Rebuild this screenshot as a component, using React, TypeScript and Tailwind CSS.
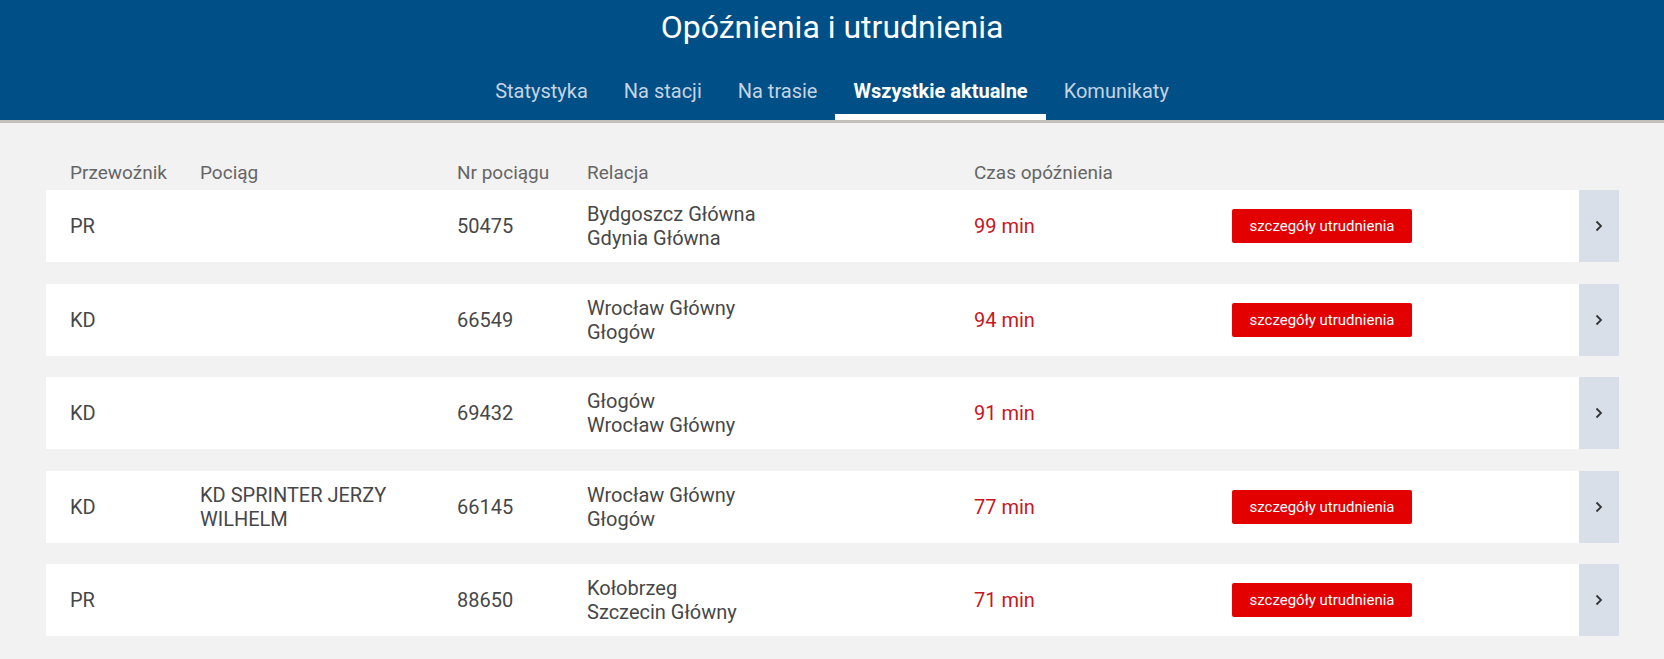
import React from "react";

interface Row {
    carrier: string;
    train: string;
    number: string;
    from: string;
    to: string;
    delay: number;
    details: boolean;
}

const rows: Row[] = [
    { carrier: "PR", train: "", number: "50475", from: "Bydgoszcz Główna", to: "Gdynia Główna", delay: 99, details: true },
    { carrier: "KD", train: "", number: "66549", from: "Wrocław Główny", to: "Głogów", delay: 94, details: true },
    { carrier: "KD", train: "", number: "69432", from: "Głogów", to: "Wrocław Główny", delay: 91, details: false },
    { carrier: "KD", train: "KD SPRINTER JERZY WILHELM", number: "66145", from: "Wrocław Główny", to: "Głogów", delay: 77, details: true },
    { carrier: "PR", train: "", number: "88650", from: "Kołobrzeg", to: "Szczecin Główny", delay: 71, details: true },
];

const tabs = ["Statystyka", "Na stacji", "Na trasie", "Wszystkie aktualne", "Komunikaty"];

const cols = "grid grid-cols-[130px_257px_130px_387px_258px_1fr] items-center";

const App: React.FC = () => {
    return (
        <div className="min-h-[659px] bg-[#f2f2f2] font-['Roboto',sans-serif] text-[#474747]">
            {/* Header */}
            <header className="bg-[#004f87] border-b-[3px] border-[#c3c0bb]">
                <h1 className="text-center text-white text-[32px] leading-[38px] pt-[8px]">Opóźnienia i utrudnienia</h1>
                <nav className="flex justify-center mt-[26px]">
                    {tabs.map((t) => {
                        const active = t === "Wszystkie aktualne";
                        return (
                            <a
                                key={t}
                                className={
                                    active
                                        ? "px-[18px] h-[48px] pt-[4px] text-[20px] font-bold text-white border-b-[6px] border-white"
                                        : "px-[18px] h-[48px] pt-[4px] text-[20px] text-[#c5d3e2] border-b-[6px] border-transparent"
                                }
                            >
                                {t}
                            </a>
                        );
                    })}
                </nav>
            </header>

            {/* Table */}
            <main className="pl-[46px] pr-[45px] pt-[36px]">
                <div className={`${cols} pl-[24px] pr-[40px] h-[31px] items-start text-[19px] text-[#666]`}>
                    <span>Przewoźnik</span>
                    <span>Pociąg</span>
                    <span>Nr pociągu</span>
                    <span>Relacja</span>
                    <span>Czas opóźnienia</span>
                    <span></span>
                </div>

                <div className="flex flex-col gap-[21.5px]">
                    {rows.map((r) => (
                        <div key={r.number} className="flex h-[72px] bg-white">
                            <div className={`${cols} flex-1 pl-[24px] text-[20px] leading-[24px]`}>
                                <span>{r.carrier}</span>
                                <span className="pr-[20px]">{r.train}</span>
                                <span>{r.number}</span>
                                <span className="flex flex-col">
                                    <span>{r.from}</span>
                                    <span>{r.to}</span>
                                </span>
                                <span className="text-[#c8161d]">{r.delay} min</span>
                                <span>
                                    {r.details && (
                                        <button className="w-[180px] h-[34px] bg-[#e30000] rounded-[2px] text-white text-[15px]">
                                            szczegóły utrudnienia
                                        </button>
                                    )}
                                </span>
                            </div>
                            <button className="w-[40px] bg-[#d8dfe9] flex items-center justify-center">
                                <svg width="8" height="12" viewBox="0 0 8 12" fill="none">
                                    <path d="M1.5 1.5 6 6l-4.5 4.5" stroke="#333" strokeWidth="1.8" />
                                </svg>
                            </button>
                        </div>
                    ))}
                </div>
            </main>
        </div>
    );
};

export default App;
